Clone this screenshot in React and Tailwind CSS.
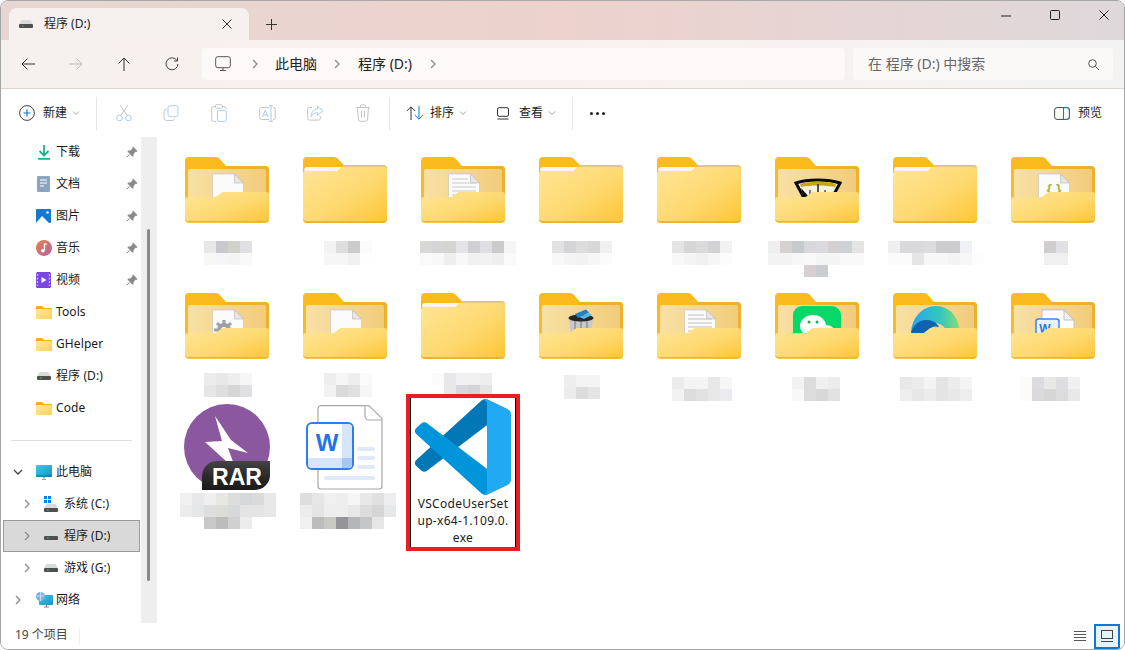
import React from 'react';

const FONT = "font-['Noto_Sans','Noto_Sans_CJK_SC',sans-serif]";

function Defs() {
  return (
    <svg className="absolute h-0 w-0" aria-hidden="true">
      <defs>
        <linearGradient id="front" x1="0" y1="0" x2="1" y2="1">
          <stop offset="0" stopColor="#fee596" />
          <stop offset="0.55" stopColor="#fed970" />
          <stop offset="1" stopColor="#fdc532" />
        </linearGradient>
        <linearGradient id="inner" x1="0" y1="0" x2="1" y2="0">
          <stop offset="0" stopColor="#f8e0a4" />
          <stop offset="1" stopColor="#f1cc7c" />
        </linearGradient>
        <linearGradient id="sfolder" x1="0" y1="0" x2="1" y2="1">
          <stop offset="0" stopColor="#ffeaa6" />
          <stop offset="1" stopColor="#ffcf52" />
        </linearGradient>
        <linearGradient id="music" x1="0" y1="0" x2="1" y2="1">
          <stop offset="0" stopColor="#ea7f47" />
          <stop offset="1" stopColor="#b464a8" />
        </linearGradient>
        <linearGradient id="screen" x1="0" y1="0" x2="1" y2="1">
          <stop offset="0" stopColor="#43c6e4" />
          <stop offset="1" stopColor="#1593c6" />
        </linearGradient>
        <linearGradient id="edge" x1="0" y1="0" x2="1" y2="0">
          <stop offset="0" stopColor="#2aa7e8" />
          <stop offset="0.6" stopColor="#34c6c0" />
          <stop offset="1" stopColor="#8ade6e" />
        </linearGradient>
        <linearGradient id="badge" x1="0" y1="0" x2="0" y2="1">
          <stop offset="0" stopColor="#444444" />
          <stop offset="0.5" stopColor="#2b2b2b" />
          <stop offset="1" stopColor="#1a1a1a" />
        </linearGradient>
      </defs>
    </svg>
  );
}

function Folder({ closed, children }) {
  if (closed) {
    return (
      <svg width="84" height="66" viewBox="0 0 84 66" className="block">
        <path d="M4 0h27c2 0 3 1 4 2l6 6h39a4 4 0 0 1 4 4v10H0V4a4 4 0 0 1 4-4z" fill="#fbbb1e" />
        <path d="M40 8h40a4 4 0 0 1 4 4v3H40z" fill="#e2c57e" />
        <path d="M2 15a3 3 0 0 1 3-5h34l-6 6H2z" fill="#f6f4ee" />
        <path d="M3 14h30c1.500 0 2-.5 3-1.500L39 10h42a3 3 0 0 1 3 3v49a4 4 0 0 1-4 4H4a4 4 0 0 1-4-4V17a3 3 0 0 1 3-3z" fill="url(#front)" />
        <path d="M0 62a4 4 0 0 0 4 4h76a4 4 0 0 0 4-4v-1a3 3 0 0 1-3 3H3a3 3 0 0 1-3-3z" fill="#eeb235" />
      </svg>
    );
  }
  return (
    <svg width="84" height="66" viewBox="0 0 84 66" className="block">
      <path d="M4 0h27c2 0 3 1 4 2l6 7h39a4 4 0 0 1 4 4v30H0V4a4 4 0 0 1 4-4z" fill="#fbbb1e" />
      <path d="M40 9h40a4 4 0 0 1 4 4v30H80V14a2 2 0 0 0-2-2H40z" fill="#efb02e" />
      <rect x="3" y="12" width="78" height="32" rx="2" fill="url(#inner)" />
      {children}
      <path d="M3 40h26c2 0 3-1 4-1.800L36 36c1-.7 1.600-1 3-1h42a3 3 0 0 1 3 3v24a4 4 0 0 1-4 4H4a4 4 0 0 1-4-4V43a3 3 0 0 1 3-3z" fill="url(#front)" />
      <path d="M0 61a4 4 0 0 0 4 4.500h76a4 4 0 0 0 4-4.500a3 3 0 0 1-3 3H3a3 3 0 0 1-3-3z" fill="#eeb235" />
    </svg>
  );
}

const Paper = ({ lines }) => (
  <g>
    <path d="M27.500 17h22l9 9v16h-31z" fill="#fbfbfb" stroke="#c9c5bc" strokeWidth=".7" />
    <path d="M49.500 17v9h9z" fill="#e6e6e4" stroke="#b9b6af" strokeWidth=".6" />
    {lines && [22, 26, 30, 34, 38].map((y) => (
      <path key={y} d={`M31 ${y}h${y < 26 ? 16 : 24}`} stroke="#c9c9c9" strokeWidth="1.200" />
    ))}
  </g>
);

const Gear = () => (
  <g>
    <Paper />
    <circle cx="39" cy="37" r="5" fill="none" stroke="#9aa0a4" strokeWidth="4" />
    <path d="M39 27v4M39 43v3M29 37h4M45 37h4M32 30l3 3M46 30l-3 3M32 44l3-3" stroke="#9aa0a4" strokeWidth="3" />
  </g>
);

const Bracket = () => (
  <g>
    <Paper />
    <text x="43" y="38" textAnchor="middle" fontSize="14" fontWeight="700" fill="#a9b63e" fontFamily="Liberation Sans, sans-serif">{'{ }'}</text>
  </g>
);

const Hat = () => (
  <g>
    <path d="M21 26c11-4 32-4 44 0l-8 15H29z" fill="#f3f0e4" stroke="#0c0c0c" strokeWidth="3" />
    <path d="M25 27c10-3 26-3 36 0l-1 3c-10-2-24-2-34 0z" fill="#c9a900" />
    <path d="M43 27v14" stroke="#222" strokeWidth="1.500" />
    <path d="M35 33v5M50 33v5" stroke="#555" strokeWidth="1.500" />
    <path d="M26 31l9 10h-6z" fill="#0c0c0c" />
  </g>
);

const Can = () => (
  <g>
    <path d="M30 25h24l-2 17H32z" fill="#c7c9cb" />
    <path d="M36 28v13M42 28v13M48 28v13" stroke="#8f9294" strokeWidth="1.500" />
    <ellipse cx="42" cy="25" rx="12.500" ry="3.500" fill="#262626" />
    <path d="M36 21l11-4.500 3 3L39 25z" fill="#1f7fc4" />
    <path d="M40 24l10-4 3 2-8 4z" fill="#55b4ea" />
  </g>
);

const WeChatIn = () => (
  <g>
    <rect x="18" y="13" width="48" height="36" rx="9" fill="#07d969" />
    <ellipse cx="38" cy="33" rx="13" ry="11" fill="#fff" />
    <circle cx="34" cy="29" r="1.500" fill="#07b955" />
    <circle cx="42" cy="29" r="1.500" fill="#07b955" />
    <ellipse cx="51" cy="39" rx="9" ry="7" fill="#eef6ee" />
  </g>
);

const EdgeIn = () => (
  <g>
    <path d="M18 42c0-17 11-29 25-29s24 12 24 29H54c0-7-5-12-13-12-10 0-16 5-23 12z" fill="url(#edge)" />
    <path d="M18 42c0-8 7-15 15-15 7 0 11 3 13 7-6-2-10 1-14 8z" fill="#0f62b0" />
  </g>
);

const WordIn = () => (
  <g>
    <path d="M31 17h22l10 10v16H31z" fill="#fff" stroke="#b8b8b8" strokeWidth=".8" />
    <path d="M53 17v10h10z" fill="#f0f0f0" stroke="#b8b8b8" strokeWidth=".8" />
    <rect x="25" y="26" width="23" height="22" rx="2.500" fill="#e8f1fe" stroke="#3d84ee" strokeWidth="1.500" />
    <text x="34" y="40" textAnchor="middle" fontSize="12" fontWeight="700" fill="#2d74dc" fontFamily="Liberation Sans, sans-serif">W</text>
  </g>
);

function Mosaic({ x, col, mt, rows }) {
  return (
    <div className="flex flex-col" style={{ marginLeft: x - col, marginTop: mt }}>
      {rows.map((row, i) => (
        <div key={i} className="flex">
          {row.split(' ').map((c, j) => (
            <div key={j} className="h-3 w-3" style={{ background: c === '.' ? 'transparent' : '#' + c }} />
          ))}
        </div>
      ))}
    </div>
  );
}

const colStart = (i) => 168 + i * 118;

const row1 = [
  { x: 204, mt: 18, content: <Paper />, rows: ['e8e8e8 c8c8cd d0d0cd dfdfe5', 'f7f7f6 f5f5f8 f4f4f5 f9f9f9'] },
  { x: 324, mt: 18, closed: true, rows: ['f3f3f3 dedede c9cbcd fbfbfb', 'f6f6f6 f5f5f5 f0f0f0 fefefe'] },
  { x: 420, mt: 18, content: <Paper lines />, rows: ['d8d8d6 d5d5d8 d4d4d2 e3e4e7 d0d0d3 dfdfe3 cbcbcc f5f5f5', 'fafafa f8f8f8 eeeeee f8f8f8 f0f0f0 f2f2f2 eeeeee fafafa'] },
  { x: 552, mt: 18, closed: true, rows: ['e2e2e2 d4d4d6 dcdcdc d8d8d8 f0f0f0', 'f8f8f8 f4f4f4 f2f2f2 f6f6f6 fbfbfb'] },
  { x: 672, mt: 18, closed: true, rows: ['e4e4e4 d6d6d8 dadada d2d2d4 f2f2f2', 'f8f8f8 f4f4f4 f0f0f0 f6f6f6 fcfcfc'] },
  { x: 768, mt: 18, content: <Hat />, rows: ['eeeeee d6d0d0 c5cacc d8d8db dadade d6cfd2 cdd2d4 e4e4e4', 'f3f3f3 f3f3f3 f7f7f7 f9f9f9 f4f4f4 f4f4f4 f9f9f9 f9f9f9', '. . . d6d0d2 c8cdd0 . . .'] },
  { x: 888, mt: 18, closed: true, rows: ['f0efef d9d9db d9d9db dcdcdf ccccce cccccf f0f1f4 ffffff', 'fbfbfb fbfbfb e5e5e5 f7f7f7 f7f7f7 f3f3f3 f7f7f7 fdfdfd'] },
  { x: 1044, mt: 18, content: <Bracket />, rows: ['cfcdcd e0e0e6', 'f0f0f0 f0f0f0'] },
];

const row2 = [
  { x: 204, mt: 14, content: <Gear />, rows: ['ececec e8e8e8 eeeeee f6f6f6', 'e6e6e6 dedede d6d6d6 e0e0e2'] },
  { x: 324, mt: 14, content: <Paper />, rows: ['eeeeee f6f6f6 eeeeee fafafa', 'f2f2f2 dadada e0e0e0 f6f6f6'] },
  { x: 432, mt: 14, closed: true, rows: ['fbfbfb e8e8ea f0f0f0 f0f0f0 eeeeee', 'ffffff e8e8e8 d8d8dc d4d4d6 e4e4e4'] },
  { x: 564, mt: 16, content: <Can />, rows: ['eeeeee f4f4f4 f4f4f4', 'ececec dcdcdc e4e4e4'] },
  { x: 672, mt: 18, content: <Paper lines />, rows: ['ececec f4f4f4 f4f4f4 e8e8e8 f6f6f6', 'f2f2f2 dcdcdc e2e2e2 e8e8e8 ececf0'] },
  { x: 792, mt: 18, content: <WeChatIn />, rows: ['f2f2f2 dcdcdc f0f0f0 ececec', 'f8f8f8 dcdcdc d8d8d8 e2e2e2'] },
  { x: 900, mt: 18, content: <EdgeIn />, rows: ['e8e8e8 ececec f4f4f4 e4e4e4 ececec f4f4f4', 'eeeeee e6e6e6 ececec e4e4e4 e8e8e8 eeeeee'] },
  { x: 1020, mt: 18, content: <WordIn />, rows: ['fdfbfa dcdce0 e8e8e8 dedee0 f0f0f0', 'fdfbfa dadadc d6d6d6 dcdcdc e8e8ea'] },
];

function FolderCell({ item, i }) {
  return (
    <div className="flex flex-col items-start">
      <div className="ml-[17px]">
        <Folder closed={item.closed}>{item.content}</Folder>
      </div>
      <Mosaic x={item.x} col={colStart(i)} mt={item.mt} rows={item.rows} />
    </div>
  );
}

const RarIcon = () => (
  <svg width="86" height="86" viewBox="0 0 86 86" className="block">
    <circle cx="43" cy="43" r="43" fill="#8b58a0" />
    <path d="M31 12L47 36L64 49L44 44L52 66L21 38L38 37Z" fill="#fff" />
    <path d="M18 86V72a15 15 0 0 1 15-15h53v14a15 15 0 0 1-15 15z" fill="url(#badge)" />
    <text x="53" y="81" textAnchor="middle" fontSize="23" fontWeight="700" fill="#fff" fontFamily="Liberation Sans, sans-serif">RAR</text>
  </svg>
);

const WordFile = () => (
  <svg width="77" height="86" viewBox="0 0 77 86" className="block">
    <path d="M15 .7h48l13 13V81a3 3 0 0 1-3 3H15a3 3 0 0 1-3-3V3.700a3 3 0 0 1 3-3z" fill="#fff" stroke="#a8a8a8" strokeWidth="1.200" />
    <path d="M59 .7V11a4 4 0 0 0 4 4h13" fill="#fff" stroke="#a8a8a8" strokeWidth="1.200" />
    <path d="M53 44h14M53 53h14M53 62h14M20 73h47" stroke="#dfe9f8" strokeWidth="4" strokeLinecap="round" />
    <rect x="1" y="18" width="46" height="46" rx="5" fill="#fff" stroke="#2d7df0" strokeWidth="2" />
    <path d="M36 19h6a4 4 0 0 1 4 4v36a4 4 0 0 1-4 4h-6z" fill="#d7e5fb" />
    <path d="M2 53h44v6a4 4 0 0 1-4 4H6a4 4 0 0 1-4-4z" fill="#d7e5fb" />
    <path d="M36 53h10v6a4 4 0 0 1-4 4h-6z" fill="#a6c6f5" />
    <text x="21" y="46" textAnchor="middle" fontSize="24" fontWeight="700" fill="#2272ec" fontFamily="Liberation Sans, sans-serif">W</text>
  </svg>
);

const VSCode = () => (
  <svg width="96" height="96" viewBox="0 0 100 100" className="block">
    <path d="M96.4614 10.7962L75.8569 0.875542C73.4719 -0.272773 70.6217 0.211611 68.75 2.08333L1.29858 63.5832C-0.515693 65.2373 -0.513607 68.0937 1.30308 69.7452L6.81272 74.754C8.29793 76.1042 10.5347 76.2036 12.1338 74.9905L93.3609 13.3699C96.086 11.3026 100 13.2462 100 16.6667V16.4275C100 14.0265 98.6246 11.8378 96.4614 10.7962Z" fill="#0277b6" />
    <path d="M96.4614 89.2038L75.8569 99.1245C73.4719 100.273 70.6217 99.7884 68.75 97.9167L1.29858 36.4169C-0.515693 34.7627 -0.513607 31.9063 1.30308 30.2548L6.81272 25.246C8.29793 23.8958 10.5347 23.7964 12.1338 25.0095L93.3609 86.6301C96.086 88.6974 100 86.7538 100 83.3334V83.5726C100 85.9735 98.6246 88.1622 96.4614 89.2038Z" fill="#0094da" />
    <path d="M75.8578 99.1263C73.4721 100.274 70.6219 99.7885 68.75 97.9166C71.0564 100.223 75 98.5895 75 95.3278V4.67213C75 1.41039 71.0564 -0.223106 68.75 2.08329C70.6219 0.211402 73.4721 -0.273666 75.8578 0.873633L96.4587 10.7807C98.6234 11.8217 100 14.0112 100 16.4132V83.5871C100 85.9891 98.6234 88.1786 96.4587 89.2196L75.8578 99.1263Z" fill="#22a9f4" />
  </svg>
);

/* small icons */
const Svg = ({ w = 16, h = 16, children }) => (
  <svg width={w} height={h} viewBox={`0 0 ${w} ${h}`} fill="none" className="block shrink-0">{children}</svg>
);

const Drive = ({ w = 14 }) => (
  <svg width={w} height="10" viewBox="0 0 14 10" className="block shrink-0">
    <path d="M2.500 1h9L14 5.500H0z" fill="#d8dadb" />
    <rect x="0" y="5" width="14" height="4" rx="1" fill="#4f4f4f" />
    <rect x="3" y="6.500" width="1.500" height="1" fill="#39d353" />
  </svg>
);

const SmallFolder = () => (
  <Svg w={16} h={13}>
    <path d="M1 0h5l2 2h7a1 1 0 0 1 1 1v3H0V1a1 1 0 0 1 1-1z" fill="#f4ad0e" />
    <path d="M1 3h14a1 1 0 0 1 1 1v8a1 1 0 0 1-1 1H1a1 1 0 0 1-1-1V4a1 1 0 0 1 1-1z" fill="url(#sfolder)" />
  </Svg>
);

const Pin = () => (
  <Svg w={12} h={12}>
    <path d="M7 .5L11.500 5 10.500 6 9.800 5.600 7.500 8 7.500 10.300 6.500 10.800 1.500 5.500 2 4.500 4.300 4.500 6.500 2.200 6.200 1.500z" fill="#8a8a8a" />
    <path d="M3.500 8.500L.8 11.200" stroke="#8a8a8a" />
  </Svg>
);

const Download = () => (
  <Svg w={14} h={15}>
    <path d="M7 0v10M2.500 6L7 10.500 11.500 6" stroke="#19b58a" strokeWidth="1.800" />
    <path d="M1 13.800h12" stroke="#19b58a" strokeWidth="1.800" />
  </Svg>
);
const Doc = () => (
  <Svg w={13} h={16}>
    <rect width="13" height="16" rx="1" fill="#8ba4c0" />
    <path d="M3 4h7M3 7h7M3 10h4" stroke="#fff" strokeWidth="1.200" />
  </Svg>
);
const Pic = () => (
  <Svg w={15} h={14}>
    <rect width="15" height="14" rx="1" fill="#1478d0" />
    <path d="M0 14l6-7 7 7z" fill="#fff" />
    <circle cx="11.500" cy="3.500" r="1.300" fill="#fff" />
  </Svg>
);
const Music = () => (
  <Svg w={16} h={16}>
    <circle cx="8" cy="8" r="8" fill="url(#music)" />
    <path d="M8.500 3.500v7" stroke="#fff" strokeWidth="1.300" />
    <path d="M8.500 3.500l2.500 1" stroke="#fff" strokeWidth="1.300" />
    <circle cx="6.800" cy="10.800" r="1.800" fill="#fff" />
  </Svg>
);
const Video = () => (
  <Svg w={15} h={16}>
    <rect width="15" height="16" rx="1.500" fill="#7a46de" />
    <path d="M5.500 5l5 3-5 3z" fill="#fff" />
    <path d="M1.500 2v12M13.500 2v12" stroke="#caa9f5" strokeWidth="1.500" strokeDasharray="2 1.500" />
  </Svg>
);
const PC = () => (
  <Svg w={16} h={15}>
    <rect width="16" height="12" rx="1" fill="url(#screen)" />
    <path d="M0 11h16" stroke="#0f6f9c" />
    <path d="M6 14.500h4M8 12v2" stroke="#9aa6ad" strokeWidth="1.200" />
  </Svg>
);
const Net = () => (
  <Svg w={17} h={16}>
    <rect x="3" y="3" width="14" height="10" rx="1" fill="url(#screen)" />
    <path d="M8 15h5M10.500 13v2" stroke="#7e8c95" strokeWidth="1.200" />
    <circle cx="4.500" cy="4.500" r="4.500" fill="#7cb2dd" />
    <path d="M1 4h7M4.500 0v9" stroke="#e3f1fb" strokeWidth=".7" />
  </Svg>
);
const SysDrive = () => (
  <div className="flex flex-col items-start">
    <svg width="7" height="7" viewBox="0 0 7 7" className="ml-0 block">
      <path d="M0 0h3v3H0zM4 0h3v3H4zM0 4h3v3H0zM4 4h3v3H4z" fill="#0f7fd8" />
    </svg>
    <Drive />
  </div>
);

const Chev = ({ down, className = '' }) => (
  <svg width="10" height="10" viewBox="0 0 10 10" fill="none" className={'block shrink-0 ' + className}>
    <path d={down ? 'M1 3l4 4 4-4' : 'M3 1l4 4-4 4'} stroke={down ? '#444' : '#8c8c8c'} strokeWidth="1.300" />
  </svg>
);

const pinned = [
  { t: '下载', i: <Download /> },
  { t: '文档', i: <Doc /> },
  { t: '图片', i: <Pic /> },
  { t: '音乐', i: <Music /> },
  { t: '视频', i: <Video /> },
];
const quick = [
  { t: 'Tools', i: <SmallFolder /> },
  { t: 'GHelper', i: <SmallFolder /> },
  { t: '程序 (D:)', i: <Drive /> },
  { t: 'Code', i: <SmallFolder /> },
];

function QuickRow({ t, i, pin }) {
  return (
    <div className="flex h-8 items-center">
      <div className="flex w-[55px] justify-center pl-[30px]">{i}</div>
      <span className="flex-1 whitespace-nowrap text-xs tracking-[0.1px] text-[#1a1a1a]">{t}</span>
      {pin && <div className="mr-[3px]"><Pin /></div>}
    </div>
  );
}

function TreeRow({ t, i, level, open, selected }) {
  return (
    <div className={selected
      ? 'ml-[2px] flex h-8 w-[137px] items-center border border-[#999999] bg-[#d9d9d9]'
      : 'ml-[2px] flex h-8 w-[137px] items-center border border-transparent'}>
      <div className={level ? 'ml-[18px] w-[22px]' : 'ml-[9px] w-[23px]'}>
        <Chev down={open} />
      </div>
      <div className="flex w-[20px] justify-start">{i}</div>
      <span className="whitespace-nowrap text-xs text-[#1a1a1a]">{t}</span>
    </div>
  );
}

const tb = '#a9cdea';
const tg = '#c4c4c4';

const ToolIcons = {
  cut: (
    <Svg w={18} h={18}>
      <path d="M5 .8l7.500 11M13 .8L5.500 11.800" stroke={tg} />
      <circle cx="4.500" cy="14" r="2.800" stroke={tb} />
      <circle cx="13.500" cy="14" r="2.800" stroke={tb} />
    </Svg>
  ),
  copy: (
    <Svg w={16} h={16}>
      <rect x="5" y=".7" width="10" height="11" rx="2" stroke={tb} />
      <path d="M3.500 4A2.500 2.500 0 0 0 1 6.500V13a2.500 2.500 0 0 0 2.500 2.500H9A2.500 2.500 0 0 0 11.500 14" stroke={tg} />
    </Svg>
  ),
  paste: (
    <Svg w={16} h={18}>
      <path d="M4 2.500H2.500A1.800 1.800 0 0 0 .8 4.300v11.400a1.800 1.800 0 0 0 1.800 1.800H5" stroke={tg} />
      <path d="M12 2.500h1.200a1.800 1.800 0 0 1 1.800 1.800V5" stroke={tg} />
      <rect x="4.500" y=".7" width="7" height="3.500" rx="1" stroke={tg} />
      <rect x="6.500" y="6.500" width="8.800" height="11" rx="1.800" stroke={tb} />
    </Svg>
  ),
  rename: (
    <Svg w={17} h={17}>
      <path d="M10 2.500H2.500A1.800 1.800 0 0 0 .7 4.300v8.400a1.800 1.800 0 0 0 1.800 1.800H10" stroke={tg} />
      <path d="M14 2.500h.7a1.500 1.500 0 0 1 1.500 1.500v9a1.500 1.500 0 0 1-1.500 1.500H14" stroke={tg} />
      <path d="M3.500 12L6.300 5 9 12M4.500 9.800h3.500" stroke={tb} />
      <path d="M10 .7h4M10 16.300h4M12 .7v15.600" stroke={tb} />
    </Svg>
  ),
  share: (
    <Svg w={17} h={16}>
      <path d="M5 2.500H2.500A1.800 1.800 0 0 0 .7 4.300v9a1.800 1.800 0 0 0 1.800 1.800h9a1.800 1.800 0 0 0 1.800-1.800V11" stroke={tg} />
      <path d="M10.500 1l5.500 4.800-5.500 4.800V7.800C7.500 7.800 5.500 9 4.200 11.500c0-4.500 2.500-7.300 6.300-7.700z" stroke={tb} />
    </Svg>
  ),
  del: (
    <Svg w={16} h={18}>
      <path d="M1 3.500h14M5.500 3.500V2a1.200 1.200 0 0 1 1.200-1.200h2.600A1.200 1.200 0 0 1 10.500 2v1.500M2.500 3.500l1 12a2 2 0 0 0 2 1.800h5a2 2 0 0 0 2-1.800l1-12M6.500 7v6.500M9.500 7v6.500" stroke={tg} />
    </Svg>
  ),
};

function Divider() {
  return <div className="h-[33px] w-px bg-[#e6e6e6]" />;
}

export default function App() {
  return (
    <div className={`${FONT} relative flex h-[650px] w-[1125px] flex-col overflow-hidden rounded-lg border border-[#a6a6a6] bg-white`}>
      <Defs />
      {/* title bar */}
      <div className="flex h-[39px] shrink-0 items-end bg-gradient-to-r from-[#e7d7d3] via-[#edd2cd] to-[#dfd8db] pl-2">
        <div className="flex h-8 w-[240px] items-center rounded-t-lg bg-[#f6f0ee] pl-[10px] pr-[17px]">
          <Drive />
          <span className="ml-[11px] flex-1 text-xs text-[#222222]">程序 (D:)</span>
          <Svg w={10} h={10}>
            <path d="M.5.500l9 9M9.500.500l-9 9" stroke="#333" />
          </Svg>
        </div>
        <div className="mb-[10px] ml-[17px]">
          <Svg w={11} h={11}>
            <path d="M5.500 0v11M0 5.500h11" stroke="#333" />
          </Svg>
        </div>
        <div className="ml-auto flex h-full items-start pr-[15px] pt-[9px]">
          <div className="mr-[39px] mt-[5px]">
            <Svg w={10} h={2}><path d="M0 1h10" stroke="#222" /></Svg>
          </div>
          <div className="mr-[39px]">
            <Svg w={10} h={10}><rect x=".5" y=".5" width="9" height="9" rx="1" stroke="#222" /></Svg>
          </div>
          <Svg w={10} h={10}><path d="M.5.500l9 9M9.500.500l-9 9" stroke="#222" /></Svg>
        </div>
      </div>

      {/* address row */}
      <div className="flex h-[49px] shrink-0 items-center border-b border-[#e2d3cf] bg-gradient-to-r from-[#f6f0ee] via-[#f9f1ee] to-[#f3f3f4]">
        <div className="ml-[20px] flex w-[181px] items-center">
          <div className="w-[48px]">
            <Svg w={14} h={14}><path d="M14 7H1M6.500 1.500L1 7l5.500 5.500" stroke="#333" /></Svg>
          </div>
          <div className="w-[48px]">
            <Svg w={14} h={14}><path d="M0 7h13M7.500 1.500L13 7l-5.500 5.500" stroke="#b8b8b8" /></Svg>
          </div>
          <div className="w-[48px]">
            <Svg w={14} h={14}><path d="M7 14V1M1.500 6.500L7 1l5.500 5.500" stroke="#333" /></Svg>
          </div>
          <Svg w={14} h={14}>
            <path d="M12 3.500A6 6 0 1 0 13 7" stroke="#444" />
            <path d="M12.500 .5v3.500H9" stroke="#444" />
          </Svg>
        </div>
        <div className="flex h-8 w-[643px] items-center rounded-[4px] bg-[#fdf9f8] pl-[13px] text-sm text-[#222222]">
          <Svg w={16} h={16}>
            <rect x=".7" y=".7" width="14.600" height="11" rx="2" stroke="#555" />
            <path d="M5 14.500h6M8 12v2.500" stroke="#555" />
          </Svg>
          <Chev className="ml-[19px]" />
          <span className="ml-[15px]">此电脑</span>
          <Chev className="ml-[15px]" />
          <span className="ml-[16px]">程序 (D:)</span>
          <Chev className="ml-[16px]" />
        </div>
        <div className="ml-2 flex h-8 w-[260px] items-center justify-between rounded-[4px] bg-[#fbf8f8] pl-[15px] pr-[14px] text-sm text-[#666666]">
          <span>在 程序 (D:) 中搜索</span>
          <Svg w={11} h={11}>
            <circle cx="4.500" cy="4.500" r="3.800" stroke="#555" />
            <path d="M7.500 7.500L11 11" stroke="#555" />
          </Svg>
        </div>
      </div>

      {/* toolbar */}
      <div className="flex h-[48px] shrink-0 items-center bg-white text-xs text-[#1a1a1a]">
        <div className="ml-[18px] flex w-[77px] items-center">
          <Svg w={16} h={16}>
            <circle cx="8" cy="8" r="7.400" stroke="#444" />
            <path d="M8 4.500v7M4.500 8h7" stroke="#0a78d4" strokeWidth="1.200" />
          </Svg>
          <span className="ml-2">新建</span>
          <Chev down className="ml-1 scale-75 opacity-50" />
        </div>
        <Divider />
        <div className="ml-[18px] flex items-center">
          <div className="flex w-[48px]">{ToolIcons.cut}</div>
          <div className="flex w-[48px]">{ToolIcons.copy}</div>
          <div className="flex w-[48px]">{ToolIcons.paste}</div>
          <div className="flex w-[48px]">{ToolIcons.rename}</div>
          <div className="flex w-[48px]">{ToolIcons.share}</div>
          <div className="flex w-[18px]">{ToolIcons.del}</div>
        </div>
        <div className="ml-[16px]"><Divider /></div>
        <div className="ml-[16px] flex w-[90px] items-center">
          <Svg w={18} h={14}>
            <path d="M5 14V1M.8 5L5 .8 9.200 5" stroke="#333" />
            <path d="M13 0v13M8.800 9l4.200 4.200L17.200 9" stroke="#0a78d4" />
          </Svg>
          <span className="ml-[6px]">排序</span>
          <Chev down className="ml-1 scale-75 opacity-50" />
        </div>
        <div className="flex w-[76px] items-center">
          <Svg w={14} h={13}>
            <rect x="1.500" y=".7" width="11" height="8.600" rx="1.500" stroke="#333" />
            <path d="M1.500 12h11" stroke="#333" />
          </Svg>
          <span className="ml-[9px]">查看</span>
          <Chev down className="ml-1 scale-75 opacity-50" />
        </div>
        <Divider />
        <div className="ml-[17px] flex gap-[3px]">
          <div className="h-[3px] w-[3px] rounded-full bg-[#222222]" />
          <div className="h-[3px] w-[3px] rounded-full bg-[#222222]" />
          <div className="h-[3px] w-[3px] rounded-full bg-[#222222]" />
        </div>
        <div className="ml-auto flex items-center pr-[22px]">
          <Svg w={16} h={13}>
            <rect x=".6" y=".6" width="14.800" height="11.800" rx="2.500" stroke="#444" />
            <path d="M10 .6h3A2.400 2.400 0 0 1 15.400 3v7A2.400 2.400 0 0 1 13 12.400h-3" stroke="#0a78d4" />
            <path d="M9.500 .6v11.800" stroke="#0a78d4" />
          </Svg>
          <span className="ml-2">预览</span>
        </div>
      </div>

      {/* body */}
      <div className="flex min-h-0 flex-1">
        <aside className="-mt-px w-[140px] shrink-0 overflow-hidden">
          {pinned.map((r) => <QuickRow key={r.t} {...r} pin />)}
          {quick.map((r) => <QuickRow key={r.t} {...r} />)}
          <div className="flex h-8 items-center pl-[10px]">
            <div className="h-px w-[121px] bg-[#dedede]" />
          </div>
          <TreeRow t="此电脑" i={<PC />} open />
          <TreeRow t="系统 (C:)" i={<SysDrive />} level />
          <TreeRow t="程序 (D:)" i={<Drive />} level selected />
          <TreeRow t="游戏 (G:)" i={<Drive />} level />
          <TreeRow t="网络" i={<Net />} />
        </aside>
        <div className="w-4 shrink-0 bg-[#eeeeee] pl-[6px] pt-[92px]">
          <div className="h-[352px] w-[3px] rounded-full bg-[#8a8a8a]" />
        </div>
        <main className="grid min-w-0 flex-1 grid-cols-[repeat(8,118px)] grid-rows-[136px_101px_auto] content-start pl-[11px] pt-[20px]">
          {row1.map((it, i) => <FolderCell key={it.x} item={it} i={i} />)}
          {row2.map((it, i) => <FolderCell key={it.x} item={it} i={i} />)}
          <div className="flex flex-col items-start pt-[10px]">
            <div className="ml-[16px]"><RarIcon /></div>
            <Mosaic x={180} col={168} mt={3} rows={[
              'f0f0f0 e8e8ea efefef e6e6e2 dcdcdc d5d7d8 dadada e8e8e8',
              'ececec e4e6e8 dedede dcdcd8 d6d8da e4e4e4 e4e4e4 e8e8e8',
              '. . c8c8c8 bcbcbc d0d0d0 ececec . .',
            ]} />
          </div>
          <div className="flex flex-col items-start pt-[11px]">
            <div className="ml-[20px]"><WordFile /></div>
            <Mosaic x={300} col={286} mt={2} rows={[
              'dedede e6e6e6 f0f0f0 eeeeee f6f6f6 e8e8e8 e0e0e0 eeeeee',
              'ececec e4e4e4 eeeeee eeeeee e8e8e6 dcdcdc d6d6d6 e6e8ea',
              'f0f0f0 bcbcbc c8c8c4 94949a b4b6b8 c6c6c6 e6e6e6 .',
            ]} />
          </div>
          <div className="ml-[2px] h-[157px] w-[114px] border-4 border-[#ed1c24]">
            <div className="flex h-full flex-col items-center border-x border-black pt-px">
              <VSCode />
              <p className="text-center text-xs leading-[17px] tracking-[0.3px] text-[#1a1a1a]">VSCodeUserSet<br />up-x64-1.109.0.<br />exe</p>
            </div>
          </div>
        </main>
      </div>

      {/* status bar */}
      <div className="flex h-[26px] shrink-0 items-center bg-white text-xs text-[#444444]">
        <span className="mb-[2px] ml-[14px]">19 个项目</span>
        <div className="ml-[11px] h-[17px] w-px bg-[#eeeeee]" />
        <div className="ml-auto flex items-center pr-[4px]">
          <div className="mr-[8px]">
            <Svg w={12} h={11}>
              <path d="M0 .5h12M0 3.500h12M0 6.500h12M0 9.500h12" stroke="#555" />
            </Svg>
          </div>
          <div className="flex h-[25px] w-[26px] items-center justify-center border-2 border-[#0a78d4] bg-[#e5f3fb]">
            <Svg w={12} h={12}>
              <rect x=".5" y=".5" width="11" height="8" stroke="#444" />
              <path d="M0 11.500h12" stroke="#444" />
            </Svg>
          </div>
        </div>
      </div>
    </div>
  );
}
